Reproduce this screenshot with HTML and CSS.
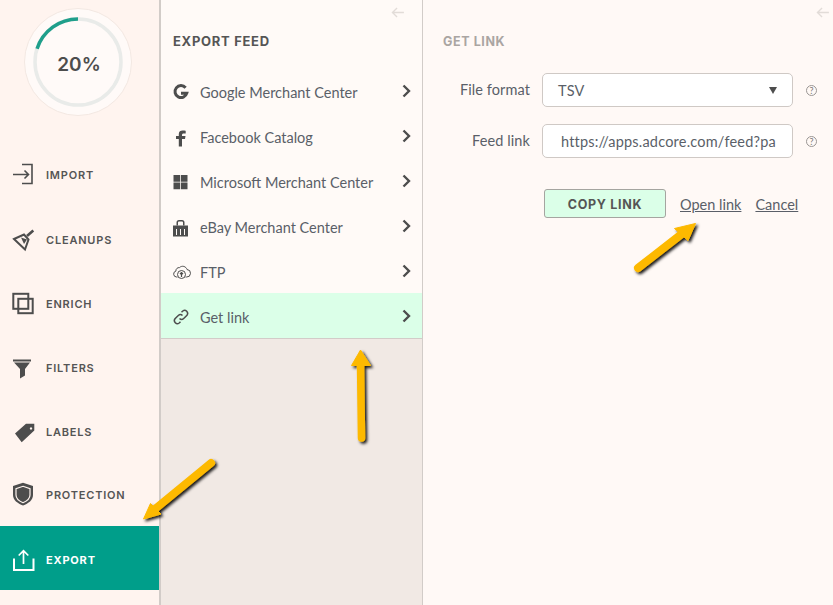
FILE: index.html
```html
<!DOCTYPE html>
<html lang="en">
<head>
<meta charset="utf-8">
<title>Export feed</title>
<link rel="stylesheet" href="styles.css">
</head>
<body>
<div class="app">
  <aside class="nav">
    <div class="score">
      <svg class="ring" width="108" height="108" viewBox="0 0 108 108">
        <circle cx="54" cy="54" r="53.5" fill="#fffaf8" stroke="#f3e8e2" stroke-width="1"/>
        <circle cx="54" cy="54" r="43" fill="none" stroke="#e9ebe9" stroke-width="3.5"/>
        <path d="M54 11A43 43 0 0 0 13.1 40.7" fill="none" stroke="#1f9f8b" stroke-width="3.5"/>
      </svg>
      <span class="score-text">20%</span>
    </div>
    <ul class="nav-list">
      <li class="nav-item nav-item-high">
        <svg class="nav-icon" viewBox="0 0 22 22" fill="none" stroke="#4d4d4d" stroke-width="1.6"><path d="M1 10.500H16.500M12.500 6.500l4 4-4 4M10 .5H20V19.500H10"/></svg>
        <span>IMPORT</span>
      </li>
      <li class="nav-item">
        <svg class="nav-icon" viewBox="0 0 22 22" fill="none" stroke="#4d4d4d"><path d="M21.300 1.500L15 7" stroke-width="2.600"/><path d="M2 10L12 5.500 16.500 10.500 13 20.500z" stroke-width="2"/><path d="M9 8.500L15 10.500 12 15z" fill="#4d4d4d" stroke="none"/></svg>
        <span>CLEANUPS</span>
      </li>
      <li class="nav-item">
        <svg class="nav-icon" viewBox="0 0 22 22" fill="none" stroke="#4d4d4d" stroke-width="2"><rect x="1.300" y=".8" width="15" height="15"/><rect x="6.300" y="5.800" width="14.400" height="14.400"/></svg>
        <span>ENRICH</span>
      </li>
      <li class="nav-item">
        <svg class="nav-icon" viewBox="0 0 22 22" fill="#4d4d4d"><path d="M1 2.500h18v2H1zM2 5.500h16l-5 6.500v6.500l-5 3V12z"/></svg>
        <span>FILTERS</span>
      </li>
      <li class="nav-item">
        <svg class="nav-icon" viewBox="0 0 22 22" fill="#4d4d4d"><path fill-rule="evenodd" d="M3 12.500L14 2.800h8.300v6.700L9.700 21.200zM19 6.300a1.200 1.200 0 1 0 .01 0z"/></svg>
        <span>LABELS</span>
      </li>
      <li class="nav-item nav-item-high">
        <svg class="nav-icon" viewBox="0 0 22 22" fill="#4d4d4d"><path d="M11-1.200L21 2v9c0 5-4.500 8.500-10 10.500C5.500 19.500 1 16 1 11V2z"/><path d="M11 2.300l7 2.400v6.300c0 3.500-3 6-7 7.700-4-1.700-7-4.200-7-7.700V4.700z" fill="none" stroke="#fff4ef" stroke-width="1.200"/></svg>
        <span>PROTECTION</span>
      </li>
      <li class="nav-item nav-item-active">
        <svg class="nav-icon" viewBox="0 0 22 22" fill="none" stroke="#fff" stroke-width="2"><path d="M2 9.500V21H21.500V9.500"/><path d="M11.500 15V2M6.700 6.500l4.800-4.800 4.800 4.800" stroke-width="1.700"/></svg>
        <span>EXPORT</span>
      </li>
    </ul>
  </aside>

  <section class="feed">
    <div class="feed-top">
      <div class="back">
        <svg width="13" height="11" viewBox="0 0 14 12" fill="none" stroke="#e2dcd8" stroke-width="1.500"><path d="M14 6H1.500M6.500 1L1.500 6l5 5"/></svg>
      </div>
      <h2 class="feed-title">EXPORT FEED</h2>
      <ul class="feed-list">
        <li class="feed-row">
          <svg class="feed-icon" viewBox="0 0 16 16" fill="none" stroke="#4d4d4d" stroke-width="3"><path d="M12.600 3.700A6 6 0 1 0 13.800 9.200H8"/></svg>
          <span class="feed-label">Google Merchant Center</span>
          <svg class="chev" viewBox="0 0 9 14" fill="none" stroke="#4d4d4d" stroke-width="2.400"><path d="M1.500 1.500L7 7l-5.500 5.500"/></svg>
        </li>
        <li class="feed-row">
          <svg class="feed-icon" viewBox="0 0 16 16" fill="#4d4d4d"><path d="M5.800 17.500V10H3V7h2.800V5c0-2.500 1.500-3.500 3.900-3.500 1.300 0 2.500.2 3 .3v2.700h-1.800C9.400 4.500 9 5.200 9 6.100V7h3.500L12 10H9v7.500z"/></svg>
          <span class="feed-label">Facebook Catalog</span>
          <svg class="chev" viewBox="0 0 9 14" fill="none" stroke="#4d4d4d" stroke-width="2.400"><path d="M1.500 1.500L7 7l-5.500 5.500"/></svg>
        </li>
        <li class="feed-row">
          <svg class="feed-icon" viewBox="0 0 16 16" fill="#4d4d4d"><path d="M.5 1h6.500v6.700H.5zM7.800 1h6.700v6.700H7.800zM.5 8.500h6.500v6.700H.5zM7.800 8.500h6.700v6.700H7.800z"/></svg>
          <span class="feed-label">Microsoft Merchant Center</span>
          <svg class="chev" viewBox="0 0 9 14" fill="none" stroke="#4d4d4d" stroke-width="2.400"><path d="M1.500 1.500L7 7l-5.500 5.500"/></svg>
        </li>
        <li class="feed-row">
          <svg class="feed-icon" viewBox="0 0 16 16" fill="#4d4d4d"><path fill-rule="evenodd" d="M0 6.500h15v11H0zM3 10v6h1v-6zM7 10v6h1v-6zM11 10v6h1v-6z"/><path d="M3.500 6.500V3.500A2.500 2.500 0 0 1 6 1h3a2.500 2.500 0 0 1 2.500 2.500v3H10V3.500a1 1 0 0 0-1-1H6a1 1 0 0 0-1 1v3z"/></svg>
          <span class="feed-label">eBay Merchant Center</span>
          <svg class="chev" viewBox="0 0 9 14" fill="none" stroke="#4d4d4d" stroke-width="2.400"><path d="M1.500 1.500L7 7l-5.500 5.500"/></svg>
        </li>
        <li class="feed-row">
          <svg class="feed-icon" viewBox="0 0 16 16" fill="none" stroke="#4d4d4d" stroke-width="1"><path d="M4.500 13h-1a3 3 0 0 1-.6-5.900 3.200 3.200 0 0 1 3.600-3.500A4.500 4.500 0 0 1 14 5.500a3.700 3.700 0 0 1-.5 7.500h-1"/><circle cx="8.500" cy="10.500" r="4"/><path d="M8.500 13V8.500M7 10l1.500-1.500L10 10" stroke-width="1.200"/></svg>
          <span class="feed-label">FTP</span>
          <svg class="chev" viewBox="0 0 9 14" fill="none" stroke="#4d4d4d" stroke-width="2.400"><path d="M1.500 1.500L7 7l-5.500 5.500"/></svg>
        </li>
        <li class="feed-row feed-row-active">
          <svg class="feed-icon" viewBox="0 0 16 16" fill="none" stroke="#4d4d4d" stroke-width="1.500"><path d="M6.500 9.500a3 3 0 0 0 4.200 0l3.300-3.300a3 3 0 0 0-4.200-4.200L8.500 3.300"/><path d="M9.500 6.500a3 3 0 0 0-4.200 0L2 9.800A3 3 0 0 0 6.200 14l1.300-1.300"/></svg>
          <span class="feed-label">Get link</span>
          <svg class="chev" viewBox="0 0 9 14" fill="none" stroke="#4d4d4d" stroke-width="2.400"><path d="M1.500 1.500L7 7l-5.500 5.500"/></svg>
        </li>
      </ul>
    </div>
    <div class="feed-rest"></div>
  </section>

  <main class="detail">
    <div class="back back-detail">
      <svg width="13" height="11" viewBox="0 0 14 12" fill="none" stroke="#e2dcd8" stroke-width="1.500"><path d="M14 6H1.500M6.500 1L1.500 6l5 5"/></svg>
    </div>
    <h2 class="detail-title">GET LINK</h2>
    <div class="form">
      <div class="field">
        <label class="field-label">File format</label>
        <div class="control control-select">
          <span>TSV</span>
          <span class="caret"></span>
        </div>
        <span class="help">?</span>
      </div>
      <div class="field">
        <label class="field-label">Feed link</label>
        <div class="control control-input"><span class="url">https://apps.adcore.com/feed?pa</span></div>
        <span class="help">?</span>
      </div>
    </div>
    <div class="actions">
      <button class="copy">COPY LINK</button>
      <a class="link">Open link</a>
      <a class="link">Cancel</a>
    </div>
  </main>
</div>

<svg class="arrows" width="833" height="605" viewBox="0 0 833 605">
  <defs>
    <filter id="shadow" x="-30%" y="-30%" width="160%" height="160%">
      <feDropShadow dx="2" dy="2" stdDeviation="1.500" flood-color="#000" flood-opacity=".9"/>
    </filter>
  </defs>
  <g fill="#fdb900" stroke="#fdb900" filter="url(#shadow)">
    <path d="M211 463L155 509" fill="none" stroke-width="8" stroke-linecap="round"/>
    <path d="M143.500 519L150.500 503.500 161 514z" stroke-width="1"/>
    <path d="M360.500 350L351.500 365.500H370.500z" stroke-width="1"/>
    <path d="M360.500 362L361.500 438" fill="none" stroke-width="7.500" stroke-linecap="round"/>
    <path d="M638 268L683 233" fill="none" stroke-width="8" stroke-linecap="round"/>
    <path d="M695.500 223.500L674.500 228.500 688 240.500z" stroke-width="1"/>
  </g>
</svg>
</body>
</html>
```

FILE: styles.css
```css
* { box-sizing: border-box; }
html, body { margin: 0; padding: 0; }
body {
  width: 833px;
  height: 605px;
  overflow: hidden;
  position: relative;
  font-family: "Lato", "Liberation Sans", sans-serif;
  color: #555;
  background: #fff9f6;
}
ul { list-style: none; margin: 0; padding: 0; }
h2 { margin: 0; }

.app { display: flex; height: 605px; }

/* left nav */
.nav {
  width: 161px;
  flex: none;
  background: #fff4ef;
  border-right: 2px solid #d2ccc8;
  padding-top: 8px;
}
.score {
  position: relative;
  width: 108px;
  height: 108px;
  margin-left: 24px;
  margin-bottom: 26px;
}
.ring { display: block; }
.score-text {
  position: absolute;
  inset: 0;
  display: flex;
  align-items: center;
  justify-content: center;
  padding-top: 4px;
  padding-left: 2px;
  font: 600 19px "Inter", sans-serif;
  color: #4d4d4d;
}
.nav-item {
  height: 64px;
  display: flex;
  align-items: center;
  gap: 12px;
  padding: 3px 0 0 12px;
  font: 600 11px "Inter", sans-serif;
  letter-spacing: .8px;
  color: #555;
}
.nav-item-high { padding-top: 1px; }
.nav-item-active { background: #009e8a; color: #fff; font-weight: 700; }
.nav-icon { width: 22px; height: 22px; flex: none; overflow: visible; }

/* middle */
.feed {
  width: 262px;
  flex: none;
  display: flex;
  flex-direction: column;
  border-right: 1px solid #d2ccc8;
}
.feed-top { background: #fffaf7; }
.feed-rest { flex: 1; background: #f1e9e4; }
.back {
  height: 26px;
  padding: 7px 18px 0 0;
  display: flex;
  justify-content: flex-end;
}
.feed-title {
  padding-left: 12px;
  height: 42px;
  padding-top: 7px;
  font: 700 13px "Inter", sans-serif;
  letter-spacing: .7px;
  color: #555;
}
.feed-row {
  height: 45px;
  display: flex;
  align-items: center;
  padding: 3px 11px 0 12px;
  font-size: 14.500px;
}
.feed-row-active {
  height: 46px;
  background: #dbffe8;
  border-bottom: 1px solid #d2ccc8;
}
.feed-icon { width: 16px; height: 16px; flex: none; margin-right: 11px; overflow: visible; }
.feed-label { flex: 1; color: #5a5f68; }
.chev { width: 9px; height: 14px; flex: none; margin-top: -2px; }

/* right */
.detail { flex: 1; padding-left: 20px; position: relative; }
.back-detail {
  position: absolute;
  top: 0;
  right: 0;
  padding: 7px 4px 0 0;
}
.detail-title {
  padding-top: 34px;
  height: 73px;
  font: 700 12.500px "Inter", sans-serif;
  letter-spacing: .6px;
  color: #aaa5a2;
}
.form { display: flex; flex-direction: column; gap: 17px; margin-left: -20px; }
.field { display: flex; align-items: center; height: 34px; }
.field-label {
  width: 107px;
  text-align: right;
  padding-bottom: 2px;
  font-size: 14.500px;
  letter-spacing: .1px;
  color: #5a5f68;
}
.control {
  margin-left: 12px;
  width: 251px;
  height: 34px;
  background: #fff;
  border: 1px solid #cfc9c5;
  border-radius: 5px;
  display: flex;
  align-items: center;
  font-size: 14.500px;
  letter-spacing: .2px;
  color: #5a5f68;
}
.control-select { padding: 0 15px; justify-content: space-between; }
.control-input { padding: 0 14px 0 18px; }
.url { white-space: nowrap; }
.caret {
  width: 0; height: 0;
  border-left: 4px solid transparent;
  border-right: 4px solid transparent;
  border-top: 7px solid #4d4d4d;
}
.help {
  margin-left: 13px;
  width: 11px;
  height: 11px;
  border: 1px solid #9a9694;
  border-radius: 50%;
  font-size: 9px;
  line-height: 9px;
  text-align: center;
  color: #7d7977;
}
.actions {
  display: flex;
  align-items: center;
  margin-top: 31px;
  margin-left: 101px;
}
.copy {
  width: 122px;
  height: 29px;
  background: #dbffe8;
  border: 1px solid #a5a5a0;
  border-radius: 3px;
  font: 700 12.500px "Inter", sans-serif;
  letter-spacing: .7px;
  color: #555;
  padding: 2px 0 0;
}
.link {
  font-size: 14.500px;
  text-decoration: underline;
  color: #5a5f68;
  margin-left: 14px;
  padding-top: 2px;
}

.arrows { position: absolute; left: 0; top: 0; pointer-events: none; }
```
